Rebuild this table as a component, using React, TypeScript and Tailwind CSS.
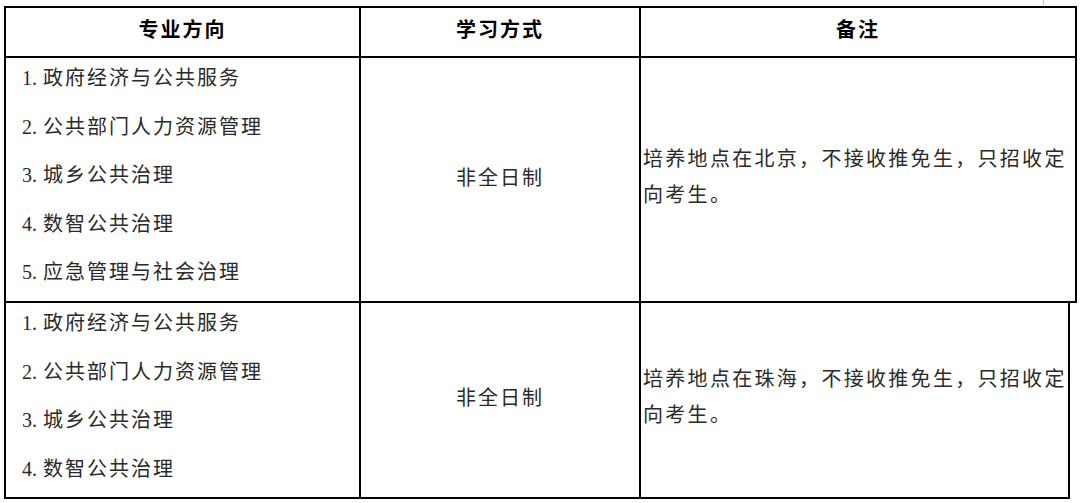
import React from "react";

const font = { fontFamily: '"Noto Sans CJK SC", "Noto Sans", sans-serif' };

function Item({ n, text, h }: { n: string; text: string; h: string }) {
  return (
    <div className={`${h} leading-[38px] whitespace-nowrap`}>
      <span className="inline-block w-[21px] font-['Liberation_Serif',serif] text-[20px]">{n}.</span>
      <span className="tracking-[2px]">{text}</span>
    </div>
  );
}

export default function App() {
  const row1 = ["政府经济与公共服务", "公共部门人力资源管理", "城乡公共治理", "数智公共治理", "应急管理与社会治理"];
  const row2 = ["政府经济与公共服务", "公共部门人力资源管理", "城乡公共治理", "数智公共治理"];
  return (
    <div className="w-[1080px] h-[503px] bg-white overflow-hidden text-[20px] text-[#2a2a2a]" style={font}>
      <div className="h-[6px] flex">
        <div className="ml-[1043px] w-px h-full bg-[#c8c8c8]" />
      </div>
      <div className="ml-[4px] w-[1073px]">
        {/* header */}
        <div className="flex h-[50px] border-t-2 border-l-2 border-r-2 border-black font-bold text-black">
          <div className="w-[353px] flex items-center justify-center pb-[7px] tracking-[2px]">专业方向</div>
          <div className="w-[280px] border-l-2 border-black flex items-center justify-center pb-[7px] tracking-[2px]">学习方式</div>
          <div className="flex-1 border-l-2 border-black flex items-center justify-center pb-[7px] tracking-[2px]">备注</div>
        </div>
        {/* row 1 */}
        <div className="flex h-[247px] border-2 border-black">
          <div className="w-[353px] pl-[16px] flex flex-col">
            {row1.map((t, i) => (
              <Item key={i} n={String(i + 1)} text={t} h="h-[48.6px]" />
            ))}
          </div>
          <div className="w-[280px] border-l-2 border-black flex items-center justify-center pb-[6px] tracking-[2px]">非全日制</div>
          <div className="flex-1 border-l-2 border-black flex flex-col justify-center pl-[2px] pb-[8px] leading-[36px] tracking-[2.3px] whitespace-nowrap">
            <div>培养地点在北京，不接收推免生，只招收定</div>
            <div>向考生。</div>
          </div>
        </div>
        {/* row 2 */}
        <div className="flex w-[1066px] h-[196px] border-l-2 border-r-2 border-b-2 border-black">
          <div className="w-[353px] pl-[16px] flex flex-col">
            {row2.map((t, i) => (
              <Item key={i} n={String(i + 1)} text={t} h="h-[48.5px]" />
            ))}
          </div>
          <div className="w-[280px] border-l-2 border-black flex items-center justify-center pb-[7px] tracking-[2px]">非全日制</div>
          <div className="flex-1 border-l-2 border-black flex flex-col justify-center pl-[2px] pb-[8px] leading-[36px] tracking-[2.3px] whitespace-nowrap">
            <div>培养地点在珠海，不接收推免生，只招收定</div>
            <div>向考生。</div>
          </div>
        </div>
      </div>
    </div>
  );
}
